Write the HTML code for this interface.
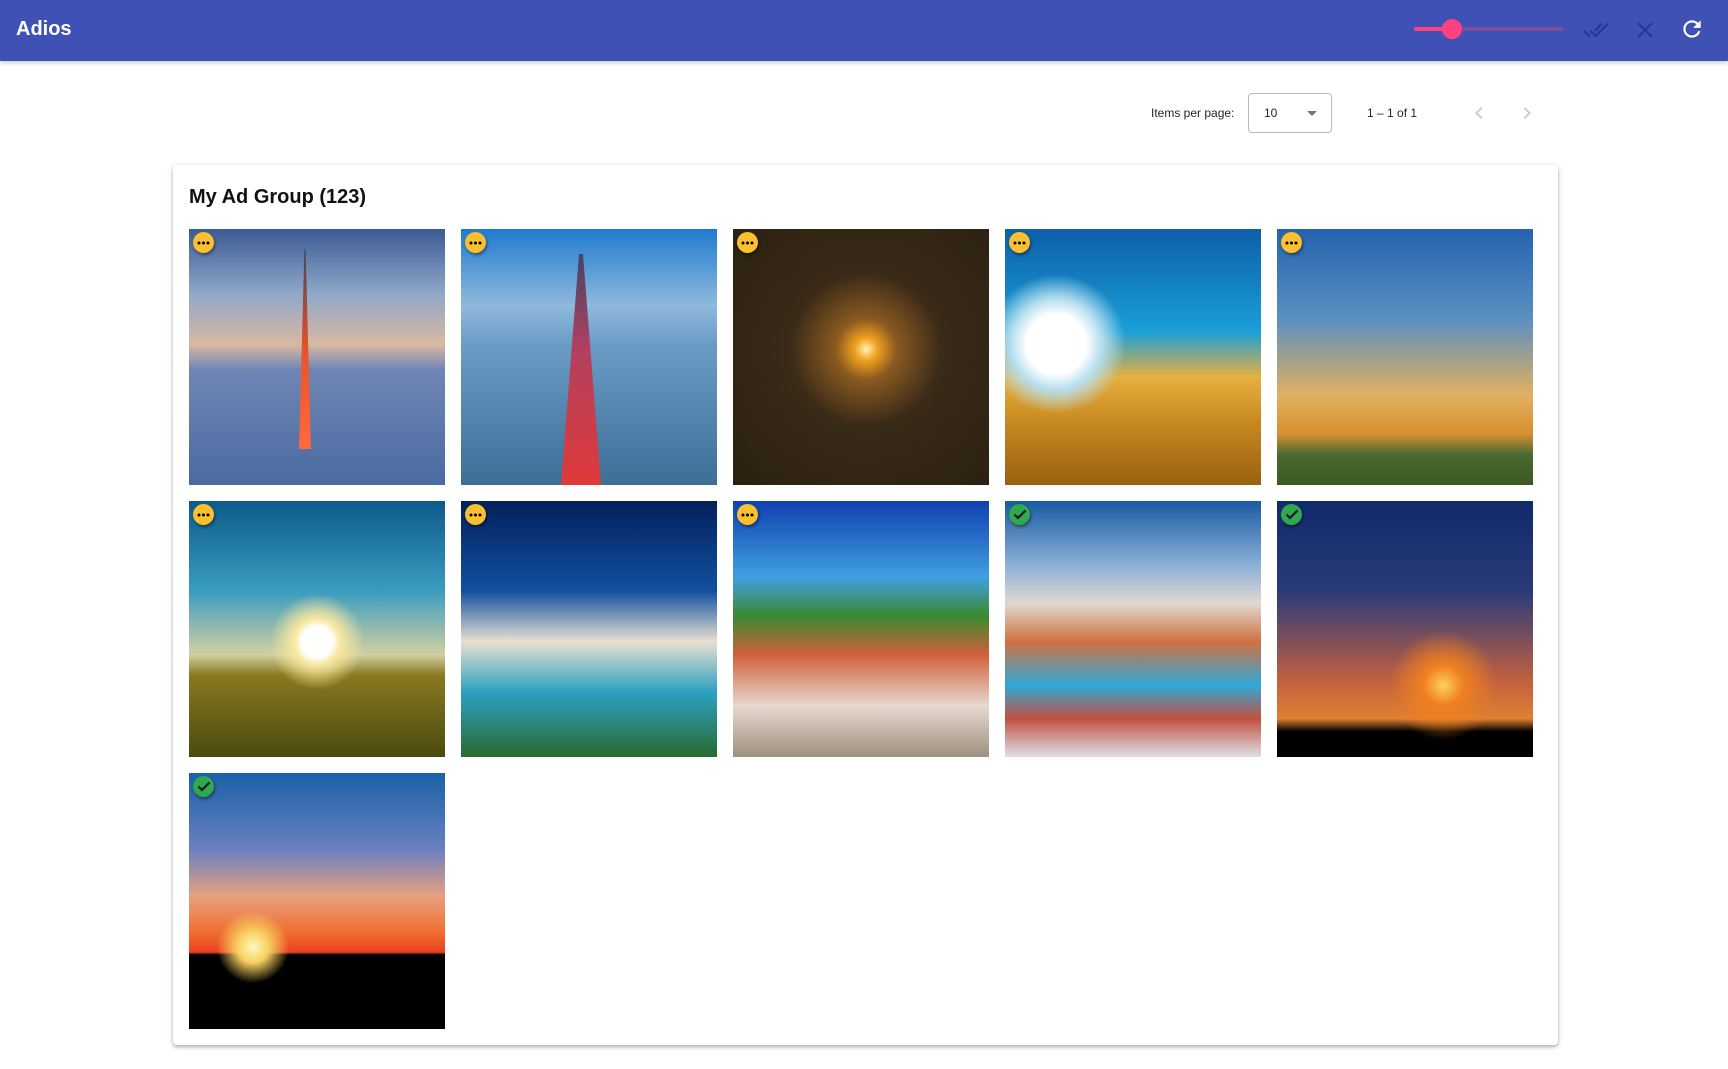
<!DOCTYPE html>
<html><head><meta charset="utf-8"><style>
*{box-sizing:border-box;margin:0;padding:0}
body{width:1728px;height:1069px;background:#fff;font-family:"Liberation Sans",sans-serif;position:relative;overflow:hidden}
.bar{position:absolute;left:0;top:0;width:1728px;height:61px;background:#3f51b5;box-shadow:0 2px 4px rgba(0,0,0,.2)}
.bar .t{position:absolute;left:16px;top:18px;color:#fff;font-size:20px;font-weight:bold}
.track{position:absolute;left:1414px;top:27px;width:149px;height:4px;border-radius:2px;background:#7a509a}
.fill{position:absolute;left:1414px;top:27px;width:40px;height:4px;border-radius:2px;background:#ff4081}
.thumb{position:absolute;left:1442px;top:19px;width:20px;height:20px;border-radius:50%;background:#ff4081}
.lbl{position:absolute;font-size:12px;color:rgba(0,0,0,.87)}
.sel{position:absolute;left:1248px;top:93px;width:84px;height:40px;border:1px solid #bbb;border-radius:4px}
.card{position:absolute;left:173px;top:165px;width:1385px;height:880px;background:#fff;border-radius:4px;box-shadow:0 2px 3px rgba(0,0,0,.25),0 1px 8px rgba(0,0,0,.12)}
.card h2{position:absolute;left:16px;top:21px;font-size:20px;font-weight:bold;color:#111}
.img{position:absolute;width:256px;height:256px;overflow:hidden}
.b{position:absolute;width:21px;height:21px;border-radius:50%;box-shadow:1px 2px 3px rgba(0,0,0,.45);display:flex;align-items:center;justify-content:center}
.y{background:#fbc02d}.g{background:#2fa84f}
</style></head><body>
<div class="bar"><div class="t">Adios</div>
<div class="track"></div><div class="fill"></div><div class="thumb"></div>
<svg style="position:absolute;left:1583px;top:17px" width="26" height="26" viewBox="0 0 24 24"><path fill="#283593" d="M18 7l-1.41-1.41-6.34 6.34 1.41 1.41L18 7zm4.24-1.41L11.66 16.17 7.48 12l-1.41 1.41L11.66 19l12-12-1.42-1.41zM.41 13.41L6 19l1.41-1.41L1.830 12 .41 13.41z"/></svg>
<svg style="position:absolute;left:1632px;top:17px" width="26" height="26" viewBox="0 0 24 24"><path fill="#283593" d="M19 6.41L17.59 5 12 10.59 6.41 5 5 6.41 10.59 12 5 17.59 6.41 19 12 13.41 17.59 19 19 17.59 13.41 12z"/></svg>
<svg style="position:absolute;left:1679px;top:16px" width="26" height="26" viewBox="0 0 24 24"><path fill="#fff" d="M17.65 6.35A7.958 7.958 0 0 0 12 4c-4.42 0-7.990 3.58-7.990 8s3.57 8 7.990 8c3.73 0 6.84-2.550 7.73-6h-2.080A5.990 5.990 0 0 1 12 18c-3.31 0-6-2.690-6-6s2.690-6 6-6c1.66 0 3.14.69 4.22 1.78L13 11h7V4l-2.350 2.350z"/></svg>
</div>
<div class="lbl" style="left:1151px;top:106px">Items per page:</div>
<div class="sel"><span class="lbl" style="left:15px;top:12px">10</span>
<svg style="position:absolute;left:58px;top:16px" width="12" height="8"><path d="M0 1h10l-5 5z" fill="#757575"/></svg></div>
<div class="lbl" style="left:1367px;top:106px">1 – 1 of 1</div>
<svg style="position:absolute;left:1467px;top:101px" width="24" height="24" viewBox="0 0 24 24"><path fill="#ccc" d="M15.41 7.41L14 6l-6 6 6 6 1.41-1.41L10.83 12z"/></svg>
<svg style="position:absolute;left:1515px;top:101px" width="24" height="24" viewBox="0 0 24 24"><path fill="#ccc" d="M10 6L8.59 7.41 13.17 12l-4.58 4.59L10 18l6-6z"/></svg>
<div class="card"><h2>My Ad Group (123)</h2>
<div class="img" style="left:16px;top:64px;background:linear-gradient(#3b5a94 0%,#8ea7c8 25%,#d9b9a2 45%,#6f86b5 55%,#4a6aa0 100%)"><div style="position:absolute;left:110px;top:20px;width:12px;height:200px;background:linear-gradient(#445,#e5532d 50%,#ff6a3a);clip-path:polygon(45% 0,55% 0,100% 100%,0 100%)"></div></div>
<div class="img" style="left:288px;top:64px;background:linear-gradient(#1f7bd0 0%,#8fb9dd 30%,#6a9cc6 45%,#3d6e96 100%)"><div style="position:absolute;left:100px;top:25px;width:40px;height:231px;background:linear-gradient(#446,#b04060 40%,#e03a3a);clip-path:polygon(45% 0,55% 0,100% 100%,0 100%)"></div></div>
<div class="img" style="left:560px;top:64px;background:radial-gradient(circle at 52% 47%,#fff3b0 0%,#f0a020 6%,#8a5a20 16%,#3a2a18 40%,#2a2010 100%)"></div>
<div class="img" style="left:832px;top:64px;background:radial-gradient(circle at 20% 45%,#fff 0%,#fff 12%,#b8e0f0 18%,transparent 28%),linear-gradient(#0d5fa8 0%,#1a9fd8 40%,#e6b040 58%,#c88a20 75%,#9a6010 100%)"></div>
<div class="img" style="left:1104px;top:64px;background:linear-gradient(#2463b0 0%,#5b8fc0 35%,#e0b060 65%,#d89030 80%,#4a6a30 88%,#3a5a20 100%)"></div>
<div class="img" style="left:16px;top:336px;background:radial-gradient(circle at 50% 55%,#fff 0%,#fff 8%,#f8e8a0 12%,transparent 25%),linear-gradient(#0d5a8a 0%,#3a9cc0 35%,#d0d0a0 60%,#8a7a20 68%,#4a4a10 100%)"></div>
<div class="img" style="left:288px;top:336px;background:linear-gradient(#05205a 0%,#1050a0 35%,#e8e0d0 55%,#2aa0c0 75%,#2a6a30 100%)"></div>
<div class="img" style="left:560px;top:336px;background:linear-gradient(#1040b0 0%,#40a0e0 30%,#3a8a30 45%,#d0603a 60%,#e8d8d0 80%,#a09080 100%)"></div>
<div class="img" style="left:832px;top:336px;background:linear-gradient(#1a5aa0 0%,#8ab0d8 25%,#e0d8d0 40%,#d07040 55%,#30a8d8 72%,#c05040 85%,#e0e0e8 100%)"></div>
<div class="img" style="left:1104px;top:336px;background:radial-gradient(circle at 65% 72%,#ffd060 0%,#f08020 8%,transparent 22%),linear-gradient(#102a6a 0%,#2a3a7a 35%,#c06040 70%,#e08030 85%,#000 90%,#000 100%)"></div>
<div class="img" style="left:16px;top:608px;background:radial-gradient(circle at 25% 68%,#fff8c0 0%,#f8d060 6%,transparent 14%),linear-gradient(#1a60a8 0%,#6a80c0 30%,#e8a080 48%,#f07030 62%,#e84020 70%,#000 71%,#000 100%)"></div>
</div>
<div class="b y" style="left:193px;top:232px"><svg width="13" height="4"><circle cx="2" cy="2" r="1.5"/><circle cx="6.5" cy="2" r="1.5"/><circle cx="11" cy="2" r="1.5"/></svg></div>
<div class="b y" style="left:465px;top:232px"><svg width="13" height="4"><circle cx="2" cy="2" r="1.5"/><circle cx="6.5" cy="2" r="1.5"/><circle cx="11" cy="2" r="1.5"/></svg></div>
<div class="b y" style="left:737px;top:232px"><svg width="13" height="4"><circle cx="2" cy="2" r="1.5"/><circle cx="6.5" cy="2" r="1.5"/><circle cx="11" cy="2" r="1.5"/></svg></div>
<div class="b y" style="left:1009px;top:232px"><svg width="13" height="4"><circle cx="2" cy="2" r="1.5"/><circle cx="6.5" cy="2" r="1.5"/><circle cx="11" cy="2" r="1.5"/></svg></div>
<div class="b y" style="left:1281px;top:232px"><svg width="13" height="4"><circle cx="2" cy="2" r="1.5"/><circle cx="6.5" cy="2" r="1.5"/><circle cx="11" cy="2" r="1.5"/></svg></div>
<div class="b y" style="left:193px;top:504px"><svg width="13" height="4"><circle cx="2" cy="2" r="1.5"/><circle cx="6.5" cy="2" r="1.5"/><circle cx="11" cy="2" r="1.5"/></svg></div>
<div class="b y" style="left:465px;top:504px"><svg width="13" height="4"><circle cx="2" cy="2" r="1.5"/><circle cx="6.5" cy="2" r="1.5"/><circle cx="11" cy="2" r="1.5"/></svg></div>
<div class="b y" style="left:737px;top:504px"><svg width="13" height="4"><circle cx="2" cy="2" r="1.5"/><circle cx="6.5" cy="2" r="1.5"/><circle cx="11" cy="2" r="1.5"/></svg></div>
<div class="b g" style="left:1009px;top:504px"><svg width="14" height="11"><path d="M1.5 5.5l3.5 3.5 7.5-7.5" stroke="#1a1a1a" stroke-width="2.2" fill="none"/></svg></div>
<div class="b g" style="left:1281px;top:504px"><svg width="14" height="11"><path d="M1.5 5.5l3.5 3.5 7.5-7.5" stroke="#1a1a1a" stroke-width="2.2" fill="none"/></svg></div>
<div class="b g" style="left:193px;top:776px"><svg width="14" height="11"><path d="M1.5 5.5l3.5 3.5 7.5-7.5" stroke="#1a1a1a" stroke-width="2.2" fill="none"/></svg></div>
</body></html>
